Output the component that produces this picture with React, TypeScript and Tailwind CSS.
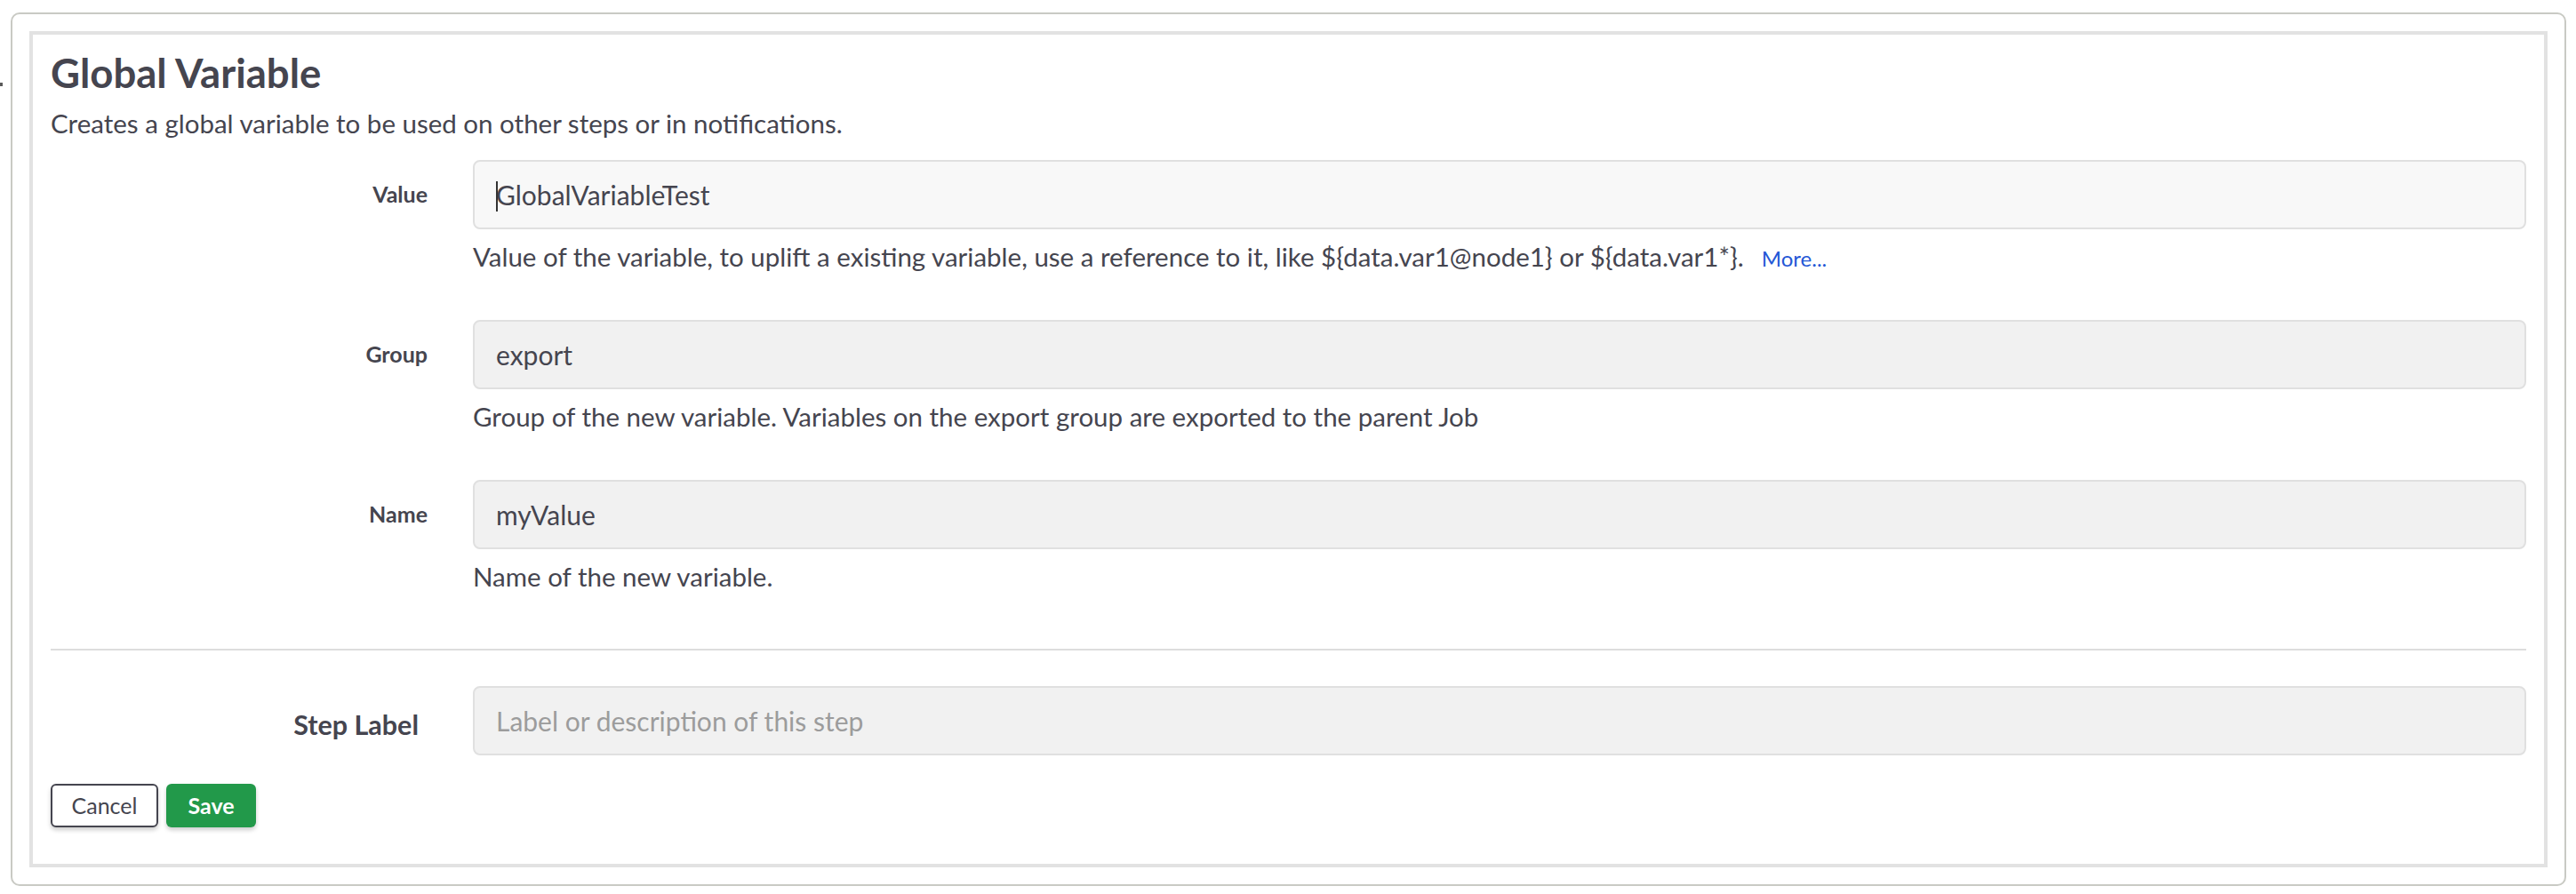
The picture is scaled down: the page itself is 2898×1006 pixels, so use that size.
import React from "react";

const fields = [
  {
    label: "Value",
    value: "GlobalVariableTest",
    focused: true,
    help: "Value of the variable, to uplift a existing variable, use a reference to it, like ${data.var1@node1} or ${data.var1*}.",
    more: true,
  },
  {
    label: "Group",
    value: "export",
    focused: false,
    help: "Group of the new variable. Variables on the export group are exported to the parent Job",
    more: false,
  },
  {
    label: "Name",
    value: "myValue",
    focused: false,
    help: "Name of the new variable.",
    more: false,
  },
];

export default function App() {
  return (
    <div className="relative min-h-screen bg-white font-['Lato',sans-serif] text-[#45454f]">
      {/* stray mark at the page edge */}
      <span className="absolute left-0 top-[93px] h-[4px] w-[3px] bg-[#5a5a5a]" />

      <div className="pl-[12px] pr-[11px] pt-[14px]">
        <div className="rounded-[10px] border-2 border-[#c9cac4] p-[19px]">
          <div className="border-4 border-[#e2e2e2] px-[20px] pt-[17px] pb-[41px]">
            {/* Header */}
            <h2 className="text-[45.5px] font-bold leading-[52px]">Global Variable</h2>
            <p className="mt-[13px] text-[29.5px] leading-[36px]">
              Creates a global variable to be used on other steps or in notifications.
            </p>

            {/* Fields */}
            <div className="mt-[23px] flex flex-col gap-[53px]">
              {fields.map((f) => (
                <div key={f.label} className="flex gap-[51px]">
                  <label className="w-[424px] shrink-0 pt-[23px] text-right text-[25px] font-bold leading-[30px]">
                    {f.label}
                  </label>
                  <div className="flex-1">
                    <div
                      className={`relative flex h-[78px] items-center rounded-[8px] border-2 border-[#e0e0e0] px-[24px] ${
                        f.focused ? "bg-[#f8f8f8]" : "bg-[#f1f1f1]"
                      }`}
                    >
                      {f.focused && (
                        <span className="absolute left-[24px] top-[22px] h-[34px] w-[2px] bg-[#333]" />
                      )}
                      <input
                        readOnly
                        value={f.value}
                        className="w-full bg-transparent text-[30px] text-[#45454f] outline-none"
                      />
                    </div>
                    <p className="mt-[13px] text-[29.5px] leading-[36px]">
                      {f.help}
                      {f.more && (
                        <a className="ml-[20px] text-[24px] leading-none text-[#2457d6]" href="#">
                          More...
                        </a>
                      )}
                    </p>
                  </div>
                </div>
              ))}
            </div>

            <hr className="mt-[63px] border-t-2 border-[#dddddd]" />

            {/* Step label */}
            <div className="mt-[40px] flex gap-[61px]">
              <label className="w-[414px] shrink-0 pt-[25px] text-right text-[30.5px] font-bold leading-[36px]">
                Step Label
              </label>
              <div className="flex h-[78px] flex-1 items-center rounded-[8px] border-2 border-[#e0e0e0] bg-[#f1f1f1] px-[24px]">
                <input
                  readOnly
                  placeholder="Label or description of this step"
                  className="w-full bg-transparent text-[30px] outline-none placeholder:text-[#9c9c9c]"
                />
              </div>
            </div>

            {/* Buttons */}
            <div className="mt-[32px] flex gap-[9px]">
              <button className="h-[49px] w-[121px] rounded-[6px] border-2 border-[#45454f] bg-white text-[25px] text-[#45454f] shadow-[0_3px_5px_rgba(0,0,0,0.2)]">
                Cancel
              </button>
              <button className="h-[49px] w-[101px] rounded-[6px] bg-[#22994a] text-[25px] font-bold text-white shadow-[0_3px_5px_rgba(0,0,0,0.2)]">
                Save
              </button>
            </div>
          </div>
        </div>
      </div>
    </div>
  );
}
